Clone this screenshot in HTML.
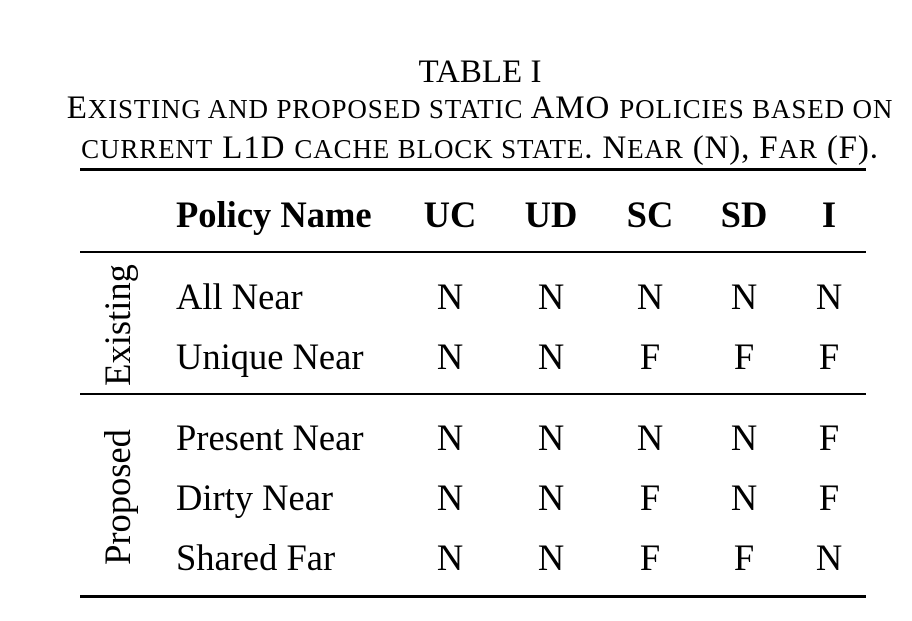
<!DOCTYPE html>
<html><head><style>
body{margin:0;width:912px;height:621px;background:#fff;position:relative;overflow:hidden;font-family:"Liberation Serif",serif;color:#000}
.a{position:absolute;white-space:nowrap;line-height:40px}
.c{transform:translateX(-50%)}
.r{position:absolute;left:80px;width:786px;background:#000}
.t{font-size:36.5px}
.h{font-size:36.5px;font-weight:bold}
.cap{font-size:33px;left:480px;letter-spacing:0.85px}
.cap s{text-decoration:none;font-size:27px}
.rot{position:absolute;font-size:36.5px;line-height:40px;white-space:nowrap;transform:translate(-50%,-50%) rotate(-90deg)}
</style></head><body>
<div class="a c" style="left:480px;top:52px;font-size:33px">TABLE I</div>
<div class="a c cap" style="top:88px">E<s>XISTING AND PROPOSED STATIC</s> AMO <s>POLICIES BASED ON</s></div>
<div class="a c cap" style="top:128px"><s>CURRENT</s> L1D <s>CACHE BLOCK STATE</s>. N<s>EAR</s> (N), F<s>AR</s> (F).</div>
<div class="r" style="top:168px;height:3px"></div>
<div class="r" style="top:251px;height:2px"></div>
<div class="r" style="top:393px;height:2px"></div>
<div class="r" style="top:595px;height:3px"></div>

<div class="a h" style="left:176px;top:195px">Policy Name</div>
<div class="a h c" style="left:450px;top:195px">UC</div>
<div class="a h c" style="left:551px;top:195px">UD</div>
<div class="a h c" style="left:650px;top:195px">SC</div>
<div class="a h c" style="left:744px;top:195px">SD</div>
<div class="a h c" style="left:829px;top:195px">I</div>

<div class="rot" style="left:118px;top:325px">Existing</div>
<div class="rot" style="left:118px;top:497px">Proposed</div>

<div class="a t" style="left:176px;top:277px">All Near</div>
<div class="a t c" style="left:450px;top:277px">N</div><div class="a t c" style="left:551px;top:277px">N</div><div class="a t c" style="left:650px;top:277px">N</div><div class="a t c" style="left:744px;top:277px">N</div><div class="a t c" style="left:829px;top:277px">N</div>

<div class="a t" style="left:176px;top:337px">Unique Near</div>
<div class="a t c" style="left:450px;top:337px">N</div><div class="a t c" style="left:551px;top:337px">N</div><div class="a t c" style="left:650px;top:337px">F</div><div class="a t c" style="left:744px;top:337px">F</div><div class="a t c" style="left:829px;top:337px">F</div>

<div class="a t" style="left:176px;top:418px">Present Near</div>
<div class="a t c" style="left:450px;top:418px">N</div><div class="a t c" style="left:551px;top:418px">N</div><div class="a t c" style="left:650px;top:418px">N</div><div class="a t c" style="left:744px;top:418px">N</div><div class="a t c" style="left:829px;top:418px">F</div>

<div class="a t" style="left:176px;top:478px">Dirty Near</div>
<div class="a t c" style="left:450px;top:478px">N</div><div class="a t c" style="left:551px;top:478px">N</div><div class="a t c" style="left:650px;top:478px">F</div><div class="a t c" style="left:744px;top:478px">N</div><div class="a t c" style="left:829px;top:478px">F</div>

<div class="a t" style="left:176px;top:538px">Shared Far</div>
<div class="a t c" style="left:450px;top:538px">N</div><div class="a t c" style="left:551px;top:538px">N</div><div class="a t c" style="left:650px;top:538px">F</div><div class="a t c" style="left:744px;top:538px">F</div><div class="a t c" style="left:829px;top:538px">N</div>
</body></html>
